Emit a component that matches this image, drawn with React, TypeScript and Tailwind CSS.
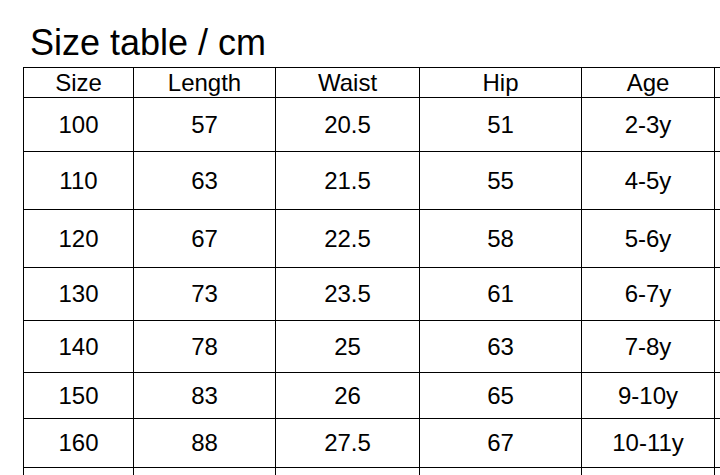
import React from 'react';

const columns = ['Size', 'Length', 'Waist', 'Hip', 'Age', ''];

const rows: { h: string; cells: string[] }[] = [
  { h: 'h-[54px]', cells: ['100', '57', '20.5', '51', '2-3y', ''] },
  { h: 'h-[58px]', cells: ['110', '63', '21.5', '55', '4-5y', ''] },
  { h: 'h-[58px]', cells: ['120', '67', '22.5', '58', '5-6y', ''] },
  { h: 'h-[53px]', cells: ['130', '73', '23.5', '61', '6-7y', ''] },
  { h: 'h-[52px]', cells: ['140', '78', '25', '63', '7-8y', ''] },
  { h: 'h-[46px]', cells: ['150', '83', '26', '65', '9-10y', ''] },
  { h: 'h-[49px]', cells: ['160', '88', '27.5', '67', '10-11y', ''] },
  { h: 'h-[40px]', cells: ['', '', '', '', '', ''] },
];

const colWidths = ['w-[110px]', 'w-[142px]', 'w-[144px]', 'w-[162px]', 'w-[133px]', 'w-[60px]'];

function Row({ h, cells }: { h: string; cells: string[] }) {
  return (
    <div className={`flex ${h}`}>
      {cells.map((c, i) => (
        <div
          key={i}
          className={`${colWidths[i]} shrink-0 border-r border-b border-black flex items-center justify-center`}
        >
          {c}
        </div>
      ))}
    </div>
  );
}

export default function App() {
  return (
    <div
      className="w-[720px] h-[475px] overflow-hidden bg-white text-black"
      style={{ fontFamily: '"Liberation Sans", Arial, sans-serif' }}
    >
      <div className="h-[67px] pt-[25px] pl-[30px] text-[36px] leading-[36px]">Size table / cm</div>
      <div className="ml-[23px] w-max border-l border-t border-black text-[24px] leading-none">
        <Row h="h-[30px]" cells={columns} />
        {rows.map((r, i) => (
          <Row key={i} h={r.h} cells={r.cells} />
        ))}
      </div>
    </div>
  );
}
